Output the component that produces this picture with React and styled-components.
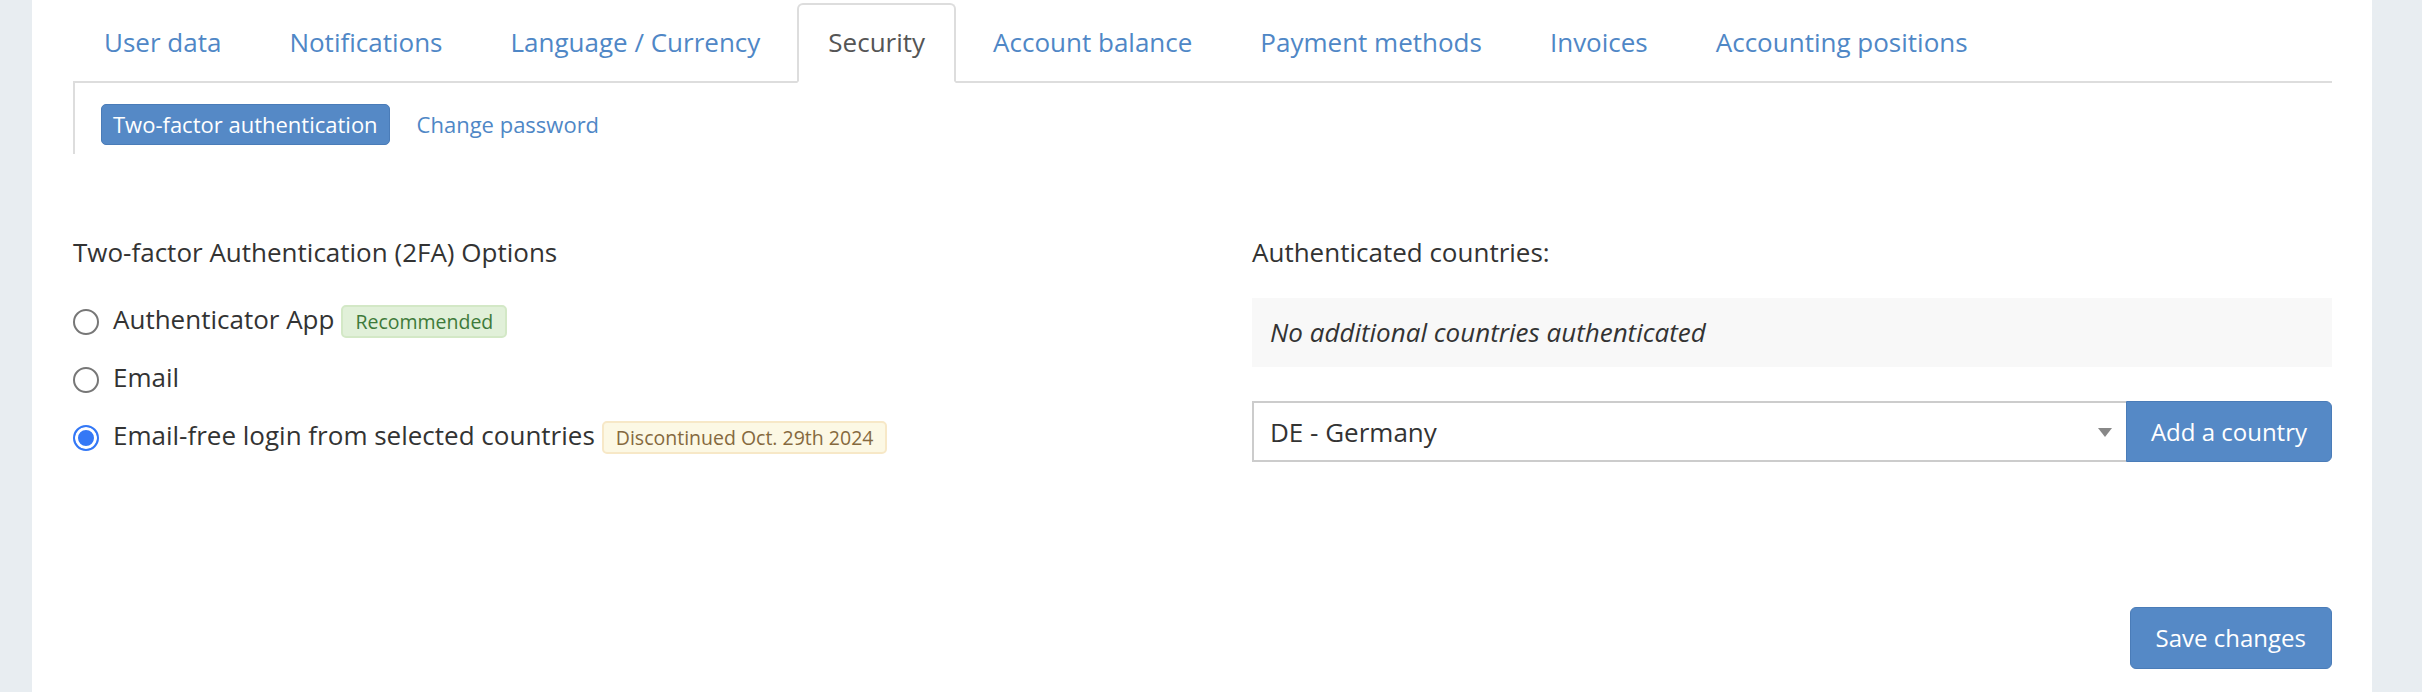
import { createGlobalStyle } from "styled-components";
import styled from "styled-components";

const GlobalStyle = createGlobalStyle`
  html, body {
    margin: 0;
    padding: 0;
    background: #e8edf1;
  }
  body {
    font-family: "Open Sans", "Noto Sans", sans-serif;
    color: #333;
  }
  * {
    box-sizing: border-box;
  }
`;

const Page = styled.div`
  margin: 0 50px 0 32px;
  min-height: 692px;
  background: #fff;
  padding: 0 40px 0 41px;
`;

const NavTabs = styled.ul`
  display: flex;
  list-style: none;
  margin: 0;
  padding: 3px 0 0;
  border-bottom: 2px solid #ddd;
`;

const Tab = styled.li`
  margin: 0 6px -2px 0;
  padding: 19px 29px 20px;
  font-size: 26px;
  line-height: 37px;
  white-space: nowrap;
  border: 2px solid ${(props) => (props.$active ? "#ddd" : "transparent")};
  border-bottom-color: ${(props) => (props.$active ? "#fff" : "transparent")};
  border-radius: 6px 6px 0 0;
  background: ${(props) => (props.$active ? "#fff" : "transparent")};
  color: ${(props) => (props.$active ? "#555" : "#4f87c6")};
  cursor: pointer;
`;

const SubNav = styled.div`
  display: flex;
  gap: 15px;
  border-left: 2px solid #ddd;
  padding: 21px 0 9px 26px;
`;

const Pill = styled.a`
  display: block;
  padding: 4px 11px;
  font-size: 22px;
  line-height: 31px;
  border-radius: 5px;
  border: 1px solid ${(props) => (props.$active ? "#4a7cb8" : "transparent")};
  background: ${(props) => (props.$active ? "#5589c6" : "transparent")};
  color: ${(props) => (props.$active ? "#fff" : "#4f87c6")};
  cursor: pointer;
`;

const Columns = styled.div`
  display: grid;
  grid-template-columns: 1fr 1fr;
  column-gap: 99px;
  margin-top: 80px;
  font-size: 26px;
  line-height: 37px;
`;

const Column = styled.div`
  display: flex;
  flex-direction: column;
`;

const Heading = styled.div`
  margin-bottom: ${(props) => props.$gap || 0}px;
`;

const RadioRow = styled.label`
  display: flex;
  align-items: center;
  height: 58px;
  cursor: pointer;
`;

const Radio = styled.input.attrs({ type: "radio" })`
  appearance: none;
  flex: none;
  width: 26px;
  height: 26px;
  margin: 6px 14px 0 0;
  border-radius: 50%;
  border: 2px solid #777;
  background: #fff;

  &:checked {
    border-color: #3478f6;
    background: #3478f6;
    box-shadow: inset 0 0 0 3px #fff;
  }
`;

const badgeColors = {
  success: { bg: "#e1f0d9", border: "#d3e8c6", text: "#3e7a3a" },
  warning: { bg: "#fcf8e4", border: "#f7e8c7", text: "#85693e" },
};

const Badge = styled.span`
  margin-left: 7px;
  margin-top: 4px;
  padding: 2px 12px;
  font-size: 19.5px;
  line-height: 25px;
  border-radius: 5px;
  border: 2px solid ${(props) => badgeColors[props.$tone].border};
  background: ${(props) => badgeColors[props.$tone].bg};
  color: ${(props) => badgeColors[props.$tone].text};
  white-space: nowrap;
`;

const EmptyBox = styled.div`
  margin-top: 27px;
  padding: 16px 18px;
  background: #f8f8f8;
  font-style: italic;
`;

const AddRow = styled.div`
  display: flex;
  margin-top: 34px;
  height: 61px;
`;

const SelectWrap = styled.div`
  position: relative;
  flex: 1;

  &::after {
    content: "";
    position: absolute;
    right: 14px;
    top: 27px;
    border-left: 7.5px solid transparent;
    border-right: 7.5px solid transparent;
    border-top: 9px solid #888;
    pointer-events: none;
  }
`;

const Select = styled.select`
  appearance: none;
  width: 100%;
  height: 100%;
  margin: 0;
  padding: 0 40px 0 16px;
  font-family: inherit;
  font-size: 26px;
  color: #333;
  background: #fff;
  border: 2px solid #ccc;
  border-right: none;
  border-radius: 0;
  outline: none;
`;

const Button = styled.button`
  flex: none;
  margin: 0;
  padding: ${(props) => (props.$attached ? "0 24px" : "13px 25px")};
  font-family: inherit;
  font-size: 24px;
  line-height: 34px;
  color: #fff;
  background: #5589c6;
  border: 1px solid #4a7cb8;
  border-radius: ${(props) => (props.$attached ? "0 6px 6px 0" : "6px")};
  cursor: pointer;
`;

const Footer = styled.div`
  display: flex;
  justify-content: flex-end;
  margin-top: 143px;
`;

const tabs = [
  "User data",
  "Notifications",
  "Language / Currency",
  "Security",
  "Account balance",
  "Payment methods",
  "Invoices",
  "Accounting positions",
];

const options = [
  { label: "Authenticator App", badge: "Recommended", tone: "success" },
  { label: "Email" },
  {
    label: "Email-free login from selected countries",
    badge: "Discontinued Oct. 29th 2024",
    tone: "warning",
    checked: true,
  },
];

export default function App() {
  return (
    <>
      <GlobalStyle />
      <Page>
        <NavTabs>
          {tabs.map((t) => (
            <Tab key={t} $active={t === "Security"}>
              {t}
            </Tab>
          ))}
        </NavTabs>
        <SubNav>
          <Pill $active>Two-factor authentication</Pill>
          <Pill>Change password</Pill>
        </SubNav>

        <Columns>
          <Column>
            <Heading $gap={19}>Two-factor Authentication (2FA) Options</Heading>
            {options.map((o) => (
              <RadioRow key={o.label}>
                <Radio name="twofa" defaultChecked={o.checked} />
                <span>{o.label}</span>
                {o.badge && <Badge $tone={o.tone}>{o.badge}</Badge>}
              </RadioRow>
            ))}
          </Column>
          <Column>
            <Heading>Authenticated countries:</Heading>
            <EmptyBox>No additional countries authenticated</EmptyBox>
            <AddRow>
              <SelectWrap>
                <Select defaultValue="DE">
                  <option value="AT">AT - Austria</option>
                  <option value="CH">CH - Switzerland</option>
                  <option value="DE">DE - Germany</option>
                  <option value="FR">FR - France</option>
                </Select>
              </SelectWrap>
              <Button $attached>Add a country</Button>
            </AddRow>
          </Column>
        </Columns>

        <Footer>
          <Button>Save changes</Button>
        </Footer>
      </Page>
    </>
  );
}
